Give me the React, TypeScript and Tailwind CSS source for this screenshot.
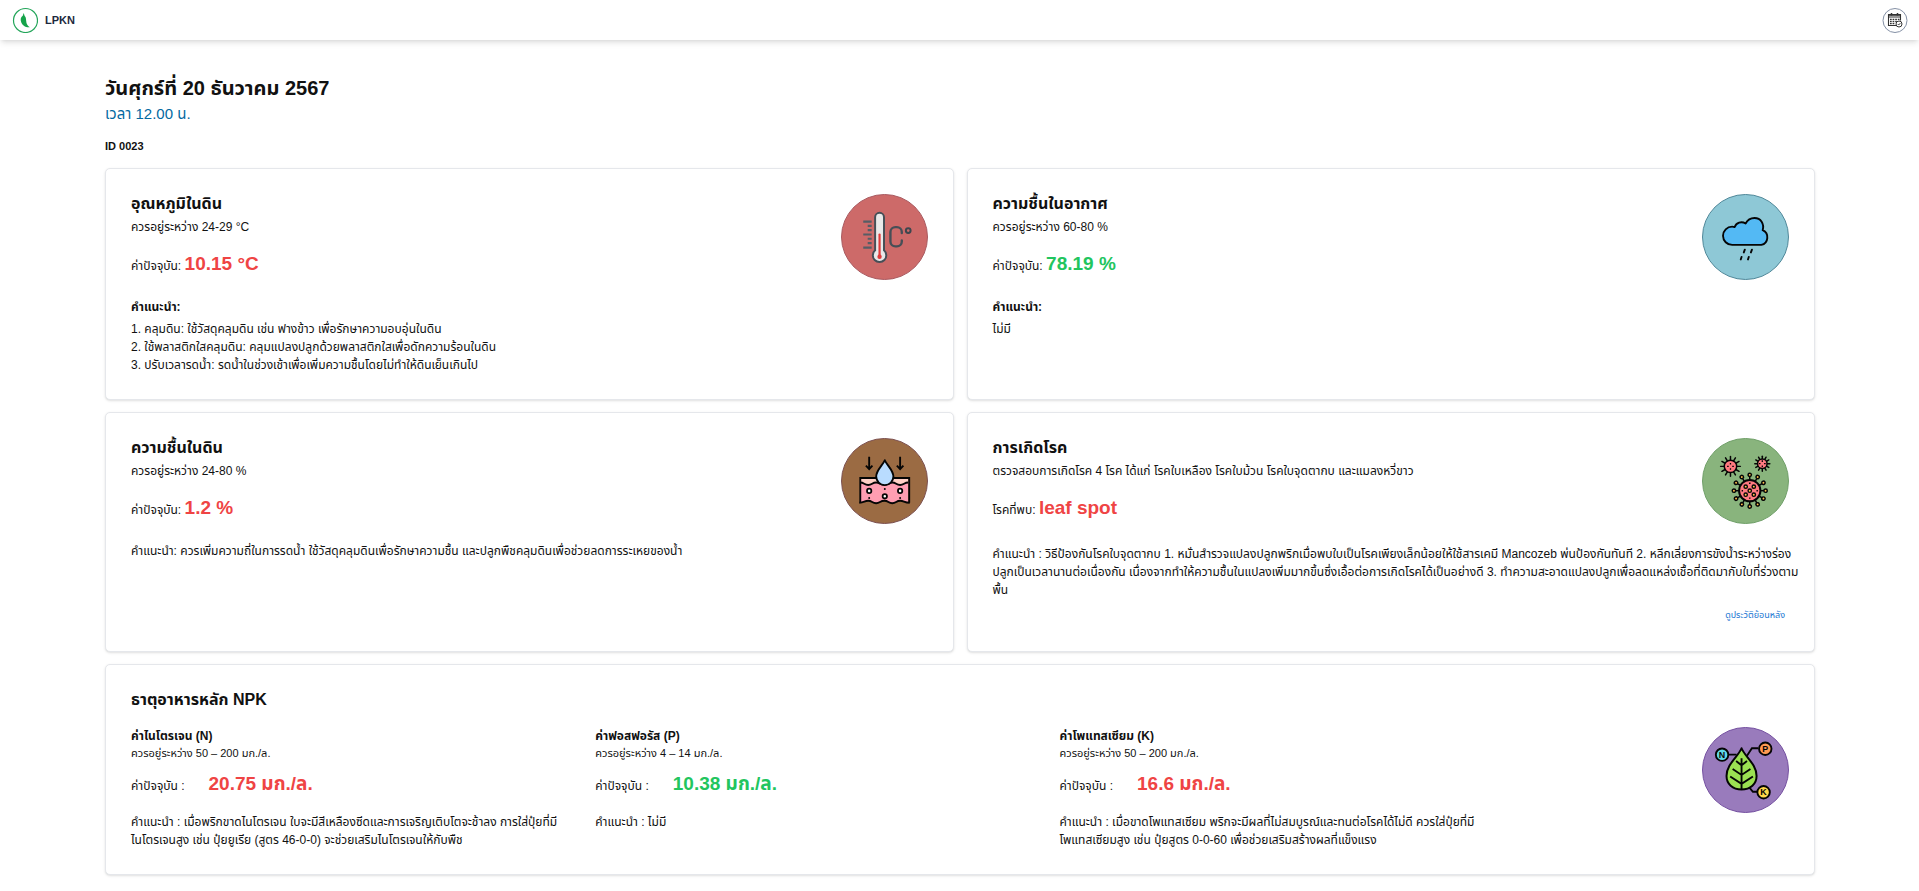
import type { ReactNode } from 'react';

const RING_ANGLES = [0, 30, 60, 90, 120, 150, 180, 210, 240, 270, 300, 330];

function Badge({ label, fill, ring, children }: { label: string; fill: string; ring: string; children: ReactNode }) {
  return (
    <svg role="img" aria-label={label} viewBox="0 0 88 87" className="h-[86px] w-[87px] shrink-0">
      <ellipse cx="44" cy="43.5" rx="43.5" ry="43" fill={fill} stroke={ring} strokeWidth="1" />
      {children}
    </svg>
  );
}

function ThermometerIcon() {
  return (
    <Badge label="อุณหภูมิ" fill="#cd6a69" ring="#a85a60">
      <path d="M34.5 57V23.5a4.5 4.5 0 0 1 9 0V57a6.8 6.8 0 1 1-9 0z" fill="#e9e9e9" stroke="#464f57" strokeWidth="2" />
      <path d="M39 41v22" stroke="#e03a3a" strokeWidth="2.2" strokeLinecap="round" />
      <circle cx="39" cy="63.5" r="2.2" fill="#e03a3a" />
      <path d="M22.5 28H31M27 32.3h4M27 36.6h4M22.5 41H31M27 45.3h4M27 49.7h4M22.5 54.2H31" stroke="#555d66" strokeWidth="2.2" />
      <path d="M61.500 39.500v-1a5 5 0 0 0-5-5h-1.500a5 5 0 0 0-5 5v9.500a5 5 0 0 0 5 5h1.500a5 5 0 0 0 5-5v-1" fill="none" stroke="#464f57" strokeWidth="2.4" strokeLinecap="round" />
      <circle cx="68" cy="37" r="2.4" fill="none" stroke="#3d464e" strokeWidth="2" />
    </Badge>
  );
}

function CloudIcon() {
  return (
    <Badge label="ความชื้นในอากาศ" fill="#8ec8d6" ring="#4f8798">
      <path
        d="M30.500 51.500a9.200 9.200 0 0 1 0-18.500q1.500 0 2.600.4c1.400-4.300 6.800-6.200 11-3.500 2-3.800 5.500-5.600 9-5.600 6.500 0 10 6 8.300 12.300a7.900 7.900 0 0 1-1.400 14.900z"
        fill="#53b9f4"
        stroke="#050505"
        strokeWidth="1.900"
        strokeLinejoin="round"
      />
      <path d="M43.300 56.300l-1 2.800M50.500 56.300l-1 2.800M40 63.700l-.8 2.500M47.300 63.700l-.8 2.500" stroke="#050505" strokeWidth="1.900" strokeLinecap="round" />
    </Badge>
  );
}

function SoilIcon() {
  return (
    <Badge label="ความชื้นในดิน" fill="#9b6b43" ring="#7b5050">
      <path d="M19.500 40.500h48.500V47H19.500z" fill="#ffd0c6" />
      <path d="M19.500 45c4 0 4 2.500 8 2.500s4-2.500 8-2.500 4 2.500 8.300 2.500 4-2.500 8-2.500 4 2.500 8 2.500 4-2.500 8.200-2.500v20.500c-4 0-4-2-8-2s-4 2.500-8 2.500-4-2.500-8.200-2.500-4 2.500-8 2.500-4-2.500-8-2.500-4 2-8.300 2z" fill="#ff9eb2" />
      <path d="M19.500 65.500v-25h49.500v25" fill="none" stroke="#050505" strokeWidth="1.900" />
      <path d="M19.500 45c4 0 4 2.500 8 2.500s4-2.500 8-2.500 4 2.500 8.300 2.500 4-2.500 8-2.500 4 2.500 8 2.500 4-2.500 8.200-2.500M18.500 65.500c5 0 5-2 9-2s4 2.500 8 2.500 4-2.500 8.300-2.500 4 2.500 8 2.500 4-2.500 8-2.500 4 2 9.700 2" fill="none" stroke="#050505" strokeWidth="1.900" />
      <path d="M44.300 22.500c2 5 8.700 10 8.700 16.500a8.700 8.700 0 0 1-17.400 0c0-6.500 6.700-11.500 8.700-16.500z" fill="#b9dcff" stroke="#050505" strokeWidth="1.900" strokeLinejoin="round" />
      <path d="M28.500 19v12M25.200 28l3.300 3.500 3.300-3.500M59.800 19v12M56.500 28l3.300 3.500 3.300-3.500" fill="none" stroke="#050505" strokeWidth="1.900" />
      <g fill="#fff" stroke="#050505" strokeWidth="1.800">
        <circle cx="28.500" cy="53.500" r="2.200" />
        <circle cx="59.800" cy="53.500" r="2.200" />
        <circle cx="44.300" cy="59" r="2.200" />
      </g>
      <g fill="#050505">
        <circle cx="44.300" cy="51.700" r="1" />
        <circle cx="28.500" cy="60.700" r="1" />
        <circle cx="59.800" cy="60.700" r="1" />
      </g>
    </Badge>
  );
}

function SmallVirus({ cx, cy, r, reach }: { cx: number; cy: number; r: number; reach: number }) {
  return (
    <g transform={`translate(${cx} ${cy})`}>
      {RING_ANGLES.map((angle) => (
        <path key={angle} d={`M${r} 0H${reach}`} transform={`rotate(${angle})`} stroke="#050505" strokeWidth="1.500" strokeLinecap="round" />
      ))}
      <circle r={r} fill="#ff7a80" stroke="#050505" strokeWidth="1.500" />
      <path d="M-3.400 0h1.600M1.800 0h1.600M0-3.400v1.600M0 1.800v1.600" stroke="#050505" strokeWidth="1.300" />
    </g>
  );
}

function VirusIcon() {
  return (
    <Badge label="การเกิดโรค" fill="#89b47d" ring="#6f9f68">
      <SmallVirus cx={28.8} cy={28.7} r={6.3} reach={10} />
      <SmallVirus cx={61} cy={26} r={4.8} reach={7.6} />
      <g transform="translate(48.300 53.300)">
        {RING_ANGLES.map((angle) => (
          <g key={angle} transform={`rotate(${angle})`} stroke="#050505" strokeWidth="1.500">
            <path d="M11 0H14.500" />
            <circle cx="16" cy="0" r="1.700" fill="#ffc04d" />
          </g>
        ))}
        <circle r="10.800" fill="#ff7a80" stroke="#050505" strokeWidth="2" />
        <g fill="#ffc04d" stroke="#050505" strokeWidth="1.400">
          <circle r="1.700" />
          <circle cx="-4.100" cy="-4.100" r="1.700" />
          <circle cx="4.100" cy="-4.100" r="1.700" />
          <circle cx="-4.100" cy="4.100" r="1.700" />
          <circle cx="4.100" cy="4.100" r="1.700" />
        </g>
        <path d="M-.8-7.500h1.600M-.8 7.500h1.600M-7.500-.8v1.600M7.500-.8v1.600" stroke="#050505" strokeWidth="1.400" />
      </g>
    </Badge>
  );
}

function NutrientIcon() {
  return (
    <Badge label="ธาตุอาหารหลัก" fill="#997bbc" ring="#7450a0">
      <path d="M26 28h9M57 21.500h-6.500L45.500 29M47 60l4.500 5.500H56" fill="none" stroke="#050505" strokeWidth="1.900" />
      <path d="M40 21.500c3 8 15.200 16 15.200 28 0 8-6.200 13.700-15.200 13.700S24.800 57.500 24.800 49.500c0-12 12.200-20 15.200-28z" fill="#9be052" stroke="#050505" strokeWidth="2" strokeLinejoin="round" />
      <path d="M40 31.500v31.500M34.500 34.500l5.500 4.200 5.500-4.200M31 42.500l9 6 9-6M28.500 50l11.500 7.500 11.500-7.500" fill="none" stroke="#050505" strokeWidth="1.900" />
      <g stroke="#050505" strokeWidth="1.900">
        <circle cx="20.300" cy="28" r="6.300" fill="#5fd8e6" />
        <circle cx="64" cy="22" r="6.300" fill="#ff9a52" />
        <circle cx="62.300" cy="66" r="6.300" fill="#ffd84a" />
      </g>
      <g fill="#050505" fontFamily="Liberation Sans, sans-serif" fontSize="9" fontWeight="700" textAnchor="middle">
        <text x="20.300" y="31.200">N</text>
        <text x="64" y="25.200">P</text>
        <text x="62.300" y="69.200">K</text>
      </g>
    </Badge>
  );
}

function ChiliLogo() {
  return (
    <svg viewBox="0 0 26 26" className="size-[26px]" aria-hidden="true">
      <circle cx="13.500" cy="13.500" r="12" fill="#fff" stroke="#22a559" strokeWidth="1.200" />
      <path d="M11.400 6c-.4 1 .1 1.900-.7 2.800-2.100 1.300-2.500 3.900-1.500 6.500 1.200 3 3.800 5.300 8.600 5-2.500-1.500-3.400-3.600-3.600-6.300-.2-2.300-.3-4.200-1.700-5.200.1-.9-.6-1.900-1.100-2.800z" fill="#16a34a" />
    </svg>
  );
}

function CalendarIcon() {
  return (
    <svg viewBox="0 0 26 26" className="size-[26px]" aria-hidden="true">
      <circle cx="13" cy="13.500" r="12" fill="#fff" stroke="#8490a5" strokeWidth="1" />
      <path d="M18.500 13.500V7.500H6.500V18.500h8" fill="none" stroke="#333" strokeWidth="1.100" />
      <path d="M6.500 8.300h12M6.500 10h12" stroke="#333" strokeWidth="1" />
      <path d="M9.500 6v2.500M15.500 6v2.500" stroke="#333" strokeWidth="1.500" />
      <path d="M8 12.300h9.500M8 14.500h7M8 16.600h5" stroke="#333" strokeWidth="1.300" strokeDasharray="1.700 .9" />
      <circle cx="17" cy="17" r="3" fill="#fff" stroke="#333" strokeWidth="1" />
      <path d="M15.700 17l1 1 1.700-1.900" fill="none" stroke="#333" strokeWidth=".9" />
    </svg>
  );
}

type Tone = 'bad' | 'good';

const toneClass: Record<Tone, string> = { bad: 'text-[#ef4444]', good: 'text-[#22c55e]' };

function Card({ children, className = '' }: { children: ReactNode; className?: string }) {
  return <section className={`rounded-[5px] border border-[#e5e7eb] bg-white p-[25px] shadow ${className}`}>{children}</section>;
}

type SensorProps = {
  title: string;
  hint: string;
  label: string;
  value: string;
  tone: Tone;
  icon: ReactNode;
  children: ReactNode;
};

function SensorCard({ title, hint, label, value, tone, icon, children }: SensorProps) {
  return (
    <Card>
      <div className="flex items-start justify-between">
        <div>
          <h2 className="text-[16px] leading-[20px] font-bold">{title}</h2>
          <p className="mt-1 leading-[18px]">{hint}</p>
          <p className="mt-[15px] leading-[26px]">
            {label} <strong className={`text-[19px] ${toneClass[tone]}`}>{value}</strong>
          </p>
        </div>
        {icon}
      </div>
      {children}
    </Card>
  );
}

type Nutrient = { name: string; range: string; value: string; tone: Tone; advice: string };

const nutrients: Nutrient[] = [
  {
    name: 'ค่าไนโตรเจน (N)',
    range: 'ควรอยู่ระหว่าง 50 – 200 มก./ล.',
    value: '20.75 มก./ล.',
    tone: 'bad',
    advice: 'เมื่อพริกขาดไนโตรเจน ใบจะมีสีเหลืองซีดและการเจริญเติบโตจะช้าลง การใส่ปุ๋ยที่มีไนโตรเจนสูง เช่น ปุ๋ยยูเรีย (สูตร 46-0-0) จะช่วยเสริมไนโตรเจนให้กับพืช',
  },
  { name: 'ค่าฟอสฟอรัส (P)', range: 'ควรอยู่ระหว่าง 4 – 14 มก./ล.', value: '10.38 มก./ล.', tone: 'good', advice: 'ไม่มี' },
  {
    name: 'ค่าโพแทสเซียม (K)',
    range: 'ควรอยู่ระหว่าง 50 – 200 มก./ล.',
    value: '16.6 มก./ล.',
    tone: 'bad',
    advice: 'เมื่อขาดโพแทสเซียม พริกจะมีผลที่ไม่สมบูรณ์และทนต่อโรคได้ไม่ดี ควรใส่ปุ๋ยที่มีโพแทสเซียมสูง เช่น ปุ๋ยสูตร 0-0-60 เพื่อช่วยเสริมสร้างผลที่แข็งแรง',
  },
];

export default function App() {
  return (
    <div className="min-h-screen bg-white font-['Liberation_Sans',Tahoma,'Noto_Sans_Thai',sans-serif] text-[12px] leading-[18px] text-[#111]">
      <header className="flex h-[40px] items-center justify-between bg-white px-[12px] shadow-md">
        <a href="#" className="flex items-center gap-[7px] text-[11px] font-bold text-slate-800">
          <ChiliLogo />
          LPKN
        </a>
        <button type="button" aria-label="ปฏิทิน" className="-mr-px">
          <CalendarIcon />
        </button>
      </header>

      <main className="mr-[104px] ml-[105px] pt-[35px]">
        <h1 className="text-[20px] leading-[26px] font-bold">วันศุกร์ที่ 20 ธันวาคม 2567</h1>
        <p className="text-[15px] leading-[26px] text-[#0369a1]">เวลา 12.00 น.</p>
        <p className="mt-[10px] text-[11px] leading-[18px] font-bold">ID 0023</p>

        <div className="mt-[13px] grid grid-cols-2 gap-x-[13px] gap-y-3">
          <SensorCard title="อุณหภูมิในดิน" hint="ควรอยู่ระหว่าง 24-29 °C" label="ค่าปัจจุบัน:" value="10.15 °C" tone="bad" icon={<ThermometerIcon />}>
            <h3 className="mt-[18px] font-bold">คำแนะนำ:</h3>
            <ol className="mt-1">
              <li>1. คลุมดิน: ใช้วัสดุคลุมดิน เช่น ฟางข้าว เพื่อรักษาความอบอุ่นในดิน</li>
              <li>2. ใช้พลาสติกใสคลุมดิน: คลุมแปลงปลูกด้วยพลาสติกใสเพื่อดักความร้อนในดิน</li>
              <li>3. ปรับเวลารดน้ำ: รดน้ำในช่วงเช้าเพื่อเพิ่มความชื้นโดยไม่ทำให้ดินเย็นเกินไป</li>
            </ol>
          </SensorCard>

          <SensorCard title="ความชื้นในอากาศ" hint="ควรอยู่ระหว่าง 60-80 %" label="ค่าปัจจุบัน:" value="78.19 %" tone="good" icon={<CloudIcon />}>
            <h3 className="mt-[18px] font-bold">คำแนะนำ:</h3>
            <p className="mt-1">ไม่มี</p>
          </SensorCard>

          <SensorCard title="ความชื้นในดิน" hint="ควรอยู่ระหว่าง 24-80 %" label="ค่าปัจจุบัน:" value="1.2 %" tone="bad" icon={<SoilIcon />}>
            <p className="mt-[18px]">คำแนะนำ: ควรเพิ่มความถี่ในการรดน้ำ ใช้วัสดุคลุมดินเพื่อรักษาความชื้น และปลูกพืชคลุมดินเพื่อช่วยลดการระเหยของน้ำ</p>
          </SensorCard>

          <SensorCard
            title="การเกิดโรค"
            hint="ตรวจสอบการเกิดโรค 4 โรค ได้แก่ โรคใบเหลือง โรคใบม้วน โรคใบจุดตากบ และแมลงหวี่ขาว"
            label="โรคที่พบ:"
            value="leaf spot"
            tone="bad"
            icon={<VirusIcon />}
          >
            <p className="mt-[21px] -mr-3">
              คำแนะนำ : วิธีป้องกันโรคใบจุดตากบ 1. หมั่นสำรวจแปลงปลูกพริกเมื่อพบใบเป็นโรคเพียงเล็กน้อยให้ใช้สารเคมี Mancozeb พ่นป้องกันทันที 2. หลีกเลี่ยงการขังน้ำระหว่างร่องปลูกเป็นเวลานานต่อเนื่องกัน เนื่องจากทำให้ความชื้นในแปลงเพิ่มมากขึ้นซึ่งเอื้อต่อการเกิดโรคได้เป็นอย่างดี 3. ทำความสะอาดแปลงปลูกเพื่อลดแหล่งเชื้อที่ติดมากับใบที่ร่วงตามพื้น
            </p>
            <div className="mt-[7px] mb-[2px] flex justify-end pr-1">
              <a href="#" className="text-[9px] text-[#1976d2]">
                ดูประวัติย้อนหลัง
              </a>
            </div>
          </SensorCard>

          <Card className="col-span-2">
            <h2 className="text-[16px] leading-[20px] font-bold">ธาตุอาหารหลัก NPK</h2>
            <div className="mt-[17px] flex items-start">
              {nutrients.map((n) => (
                <div key={n.name} className="w-[28%] pr-6">
                  <h3 className="leading-[18px] font-bold">{n.name}</h3>
                  <p className="text-[11px] leading-[16px]">{n.range}</p>
                  <p className="mt-[10px] flex items-baseline gap-6 leading-[26px]">
                    ค่าปัจจุบัน :
                    <strong className={`text-[19px] ${toneClass[n.tone]}`}>{n.value}</strong>
                  </p>
                  <p className="mt-[14px]">{`คำแนะนำ : ${n.advice}`}</p>
                </div>
              ))}
              <div className="ml-auto">
                <NutrientIcon />
              </div>
            </div>
          </Card>
        </div>
      </main>
    </div>
  );
}
